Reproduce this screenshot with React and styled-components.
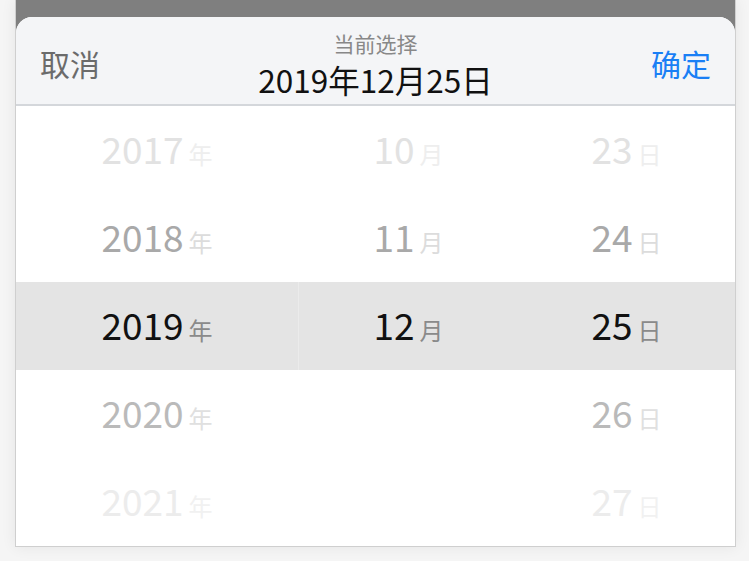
import React from 'react';
import styled, { createGlobalStyle } from 'styled-components';

const GlobalStyle = createGlobalStyle`
  html, body {
    margin: 0;
    padding: 0;
    background: #f5f5f5;
    font-family: "Noto Sans CJK SC", "Noto Sans", sans-serif;
  }
`;

const Page = styled.div`
  width: 749px;
  height: 561px;
  box-sizing: border-box;
  padding: 0 13px 0 15px;
  overflow: hidden;
`;

const Frame = styled.div`
  background: #7f7f7f;
  border: 1px solid #cfcfcf;
  border-top: none;
  padding-top: 17px;
  box-shadow: 0 0 14px rgba(0, 0, 0, 0.07);
`;

const Sheet = styled.div`
  border-radius: 16px 16px 0 0;
  overflow: hidden;
  background: #fff;
`;

const Header = styled.div`
  height: 89px;
  box-sizing: border-box;
  display: flex;
  align-items: center;
  justify-content: space-between;
  padding: 0 24px;
  background: #f4f5f7;
  border-bottom: 2px solid #d4d7db;
`;

const HeaderButton = styled.span`
  font-size: 30px;
  line-height: 36px;
  color: ${(p) => (p.$primary ? '#1a7ff5' : '#6b6b6b')};
  margin-top: 4px;
`;

const TitleBlock = styled.div`
  display: flex;
  flex-direction: column;
  align-items: center;
  gap: 6px;
  margin-top: 6px;
`;

const Caption = styled.div`
  font-size: 21px;
  line-height: 24px;
  color: #888;
`;

const Current = styled.div`
  font-size: 31.5px;
  line-height: 36px;
  color: #111;
`;

const Wheel = styled.div`
  display: grid;
  grid-template-columns: 283px 220px 1fr;
`;

const Column = styled.div`
  display: flex;
  flex-direction: column;
`;

const Cell = styled.div`
  height: 88px;
  display: flex;
  align-items: baseline;
  justify-content: center;
  padding-top: 20px;
  box-sizing: border-box;
  background: ${(p) => (p.$active ? '#e4e4e4' : 'transparent')};
  border-right: 1px solid ${(p) => (p.$active && p.$divider ? '#ebebeb' : 'transparent')};
`;

const Num = styled.span`
  font-size: 37px;
  line-height: 44px;
  color: ${(p) => p.$color};
`;

const Unit = styled.span`
  font-size: 24px;
  line-height: 28px;
  margin-left: 5px;
  color: ${(p) => p.$color};
`;

const numColors = ['#e2e2e2', '#a9a9a9', '#111111', '#bababa', '#ececec'];
const unitColors = ['#eeeeee', '#dcdcdc', '#8a8a8a', '#e0e0e0', '#f1f1f1'];

const columns = [
  { unit: '年', values: ['2017', '2018', '2019', '2020', '2021'], divider: true },
  { unit: '月', values: ['10', '11', '12', null, null] },
  { unit: '日', values: ['23', '24', '25', '26', '27'] },
];

function PickerColumn({ unit, values, divider }) {
  return (
    <Column>
      {values.map((v, i) => (
        <Cell key={i} $active={i === 2} $divider={divider}>
          {v && (
            <>
              <Num $color={numColors[i]}>{v}</Num>
              <Unit $color={unitColors[i]}>{unit}</Unit>
            </>
          )}
        </Cell>
      ))}
    </Column>
  );
}

export default function App() {
  return (
    <>
      <GlobalStyle />
      <Page>
        <Frame>
          <Sheet>
            <Header>
              <HeaderButton>取消</HeaderButton>
              <TitleBlock>
                <Caption>当前选择</Caption>
                <Current>2019年12月25日</Current>
              </TitleBlock>
              <HeaderButton $primary>确定</HeaderButton>
            </Header>
            <Wheel>
              {columns.map((c) => (
                <PickerColumn key={c.unit} {...c} />
              ))}
            </Wheel>
          </Sheet>
        </Frame>
      </Page>
    </>
  );
}
